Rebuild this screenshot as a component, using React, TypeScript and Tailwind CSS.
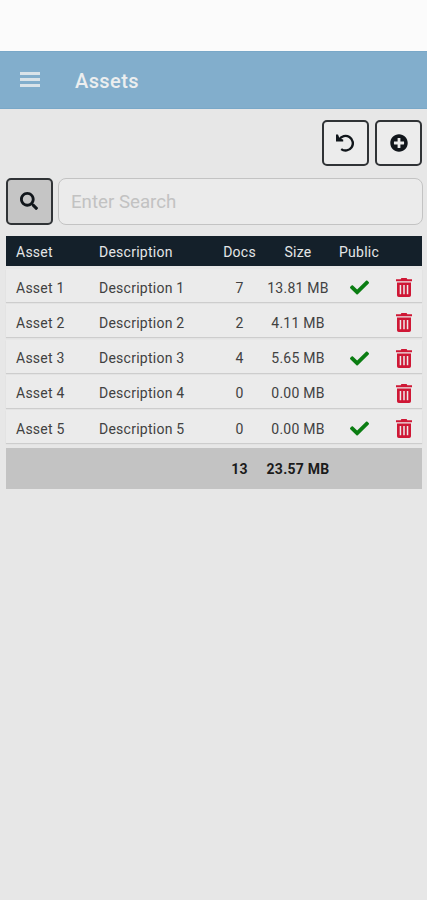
import { useState } from "react";
import { FaCheck, FaPlusCircle, FaSearch } from "react-icons/fa";

type Asset = {
  name: string;
  description: string;
  docs: number;
  size: number;
  isPublic: boolean;
};

const assets: Asset[] = [
  { name: "Asset 1", description: "Description 1", docs: 7, size: 13.81, isPublic: true },
  { name: "Asset 2", description: "Description 2", docs: 2, size: 4.11, isPublic: false },
  { name: "Asset 3", description: "Description 3", docs: 4, size: 5.65, isPublic: true },
  { name: "Asset 4", description: "Description 4", docs: 0, size: 0, isPublic: false },
  { name: "Asset 5", description: "Description 5", docs: 0, size: 0, isPublic: true },
];

const columns =
  "grid grid-cols-[83px_118px_45px_72px_50px_39px] items-center pl-2.5";

const Header = () => (
  <header className="flex h-[58px] items-center border-y border-[#79a8c8] bg-[#82aecc] pl-5 text-[#eceeef]">
    <button aria-label="Open menu" className="mb-px flex w-5 flex-col gap-[3px]">
      <span className="h-[3px] w-full bg-[#d9e3e9]" />
      <span className="h-[3px] w-full bg-[#d9e3e9]" />
      <span className="h-[3px] w-full bg-[#d9e3e9]" />
    </button>
    <h1 className="ml-[35px] pt-0.5 text-[20px] font-medium tracking-[0.4px]">
      Assets
    </h1>
  </header>
);

const UndoIcon = () => (
  <svg className="mr-0.5 h-[18px] w-[18px]" viewBox="0 0 18 18" fill="none">
    <path
      d="M3.2 5.6A7.3 7.3 0 1 1 5.2 15.1"
      stroke="currentColor"
      strokeWidth={2.4}
    />
    <path d="M0 .6h2L3.6 4.6l3.6.9v2H0z" fill="currentColor" />
  </svg>
);

const TrashIcon = () => (
  <svg className="h-[19px] w-4" viewBox="0 0 16 19" fill="currentColor">
    <path d="M5.4 0h5.2l.7 1.3H16v2H0v-2h4.7z" />
    <path
      fillRule="evenodd"
      d="M1 4.6h14v12.6a1.8 1.8 0 0 1-1.8 1.8H2.8A1.8 1.8 0 0 1 1 17.2zM3.7 7v9.2h1.5V7zM7.25 7v9.2h1.5V7zM10.8 7v9.2h1.5V7z"
    />
  </svg>
);

export default function App() {
  const [search, setSearch] = useState("");

  const visible = assets.filter((asset) =>
    asset.name.toLowerCase().includes(search.toLowerCase())
  );
  const totalDocs = visible.reduce((sum, asset) => sum + asset.docs, 0);
  const totalSize = visible.reduce((sum, asset) => sum + asset.size, 0);

  return (
    <div className="min-h-screen bg-[#e7e7e7] font-['Roboto',sans-serif]">
      <div className="h-[51px] bg-[#fbfbfb]" />
      <Header />

      <main className="pt-[11px] pr-1 pl-1.5">
        <div className="flex justify-end gap-1.5 pr-px">
          <button
            aria-label="Reset"
            onClick={() => setSearch("")}
            className="flex h-[46px] w-[47px] items-center justify-center rounded-[5px] border-2 border-[#303336] bg-[#ececec] text-[#11161b]"
          >
            <UndoIcon />
          </button>
          <button
            aria-label="Add asset"
            className="flex h-[46px] w-[47px] items-center justify-center rounded-[5px] border-2 border-[#303336] bg-[#ececec] text-[#11161b]"
          >
            <FaPlusCircle className="h-[18px] w-[18px]" />
          </button>
        </div>

        <div className="mt-3 flex gap-[5px]">
          <button
            aria-label="Search"
            className="flex h-[47px] w-[47px] shrink-0 items-center justify-center rounded-[5px] border-2 border-[#303336] bg-[#c5c5c5] pr-px pb-px text-[#11161b]"
          >
            <FaSearch className="h-[18px] w-[18px]" />
          </button>
          <input
            value={search}
            onChange={(e) => setSearch(e.target.value)}
            placeholder="Enter Search"
            className="h-[47px] min-w-0 flex-1 rounded-[8px] border border-[#c3c3c3] bg-[#ebebeb] px-3 text-[18.7px] text-[#333] outline-none placeholder:text-[#c2c2c2]"
          />
        </div>

        <div className="mt-[11px] mr-px text-[14px] tracking-[0.25px]">
          <div className={`${columns} h-[30px] bg-[#14202a] pt-0.5 text-[#e4e6e7]`}>
            <span>Asset</span>
            <span>Description</span>
            <span className="text-center">Docs</span>
            <span className="text-center">Size</span>
            <span className="text-center">Public</span>
          </div>

          <div className="flex flex-col pt-[3px]">
            {visible.map((asset) => (
              <div
                key={asset.name}
                className={`${columns} mb-[2.25px] h-[33px] bg-[#ebebeb] pt-[5px] text-[#414141] shadow-[0_1px_1px_#cdcdcd]`}
              >
                <span>{asset.name}</span>
                <span>{asset.description}</span>
                <span className="text-center">{asset.docs}</span>
                <span className="text-center">{asset.size.toFixed(2)} MB</span>
                <span className="flex justify-center">
                  {asset.isPublic && (
                    <FaCheck className="mb-px h-[19px] w-[19px] text-[#0b7d12]" />
                  )}
                </span>
                <button
                  aria-label={`Delete ${asset.name}`}
                  className="mb-px flex justify-center text-[#cf1735]"
                >
                  <TrashIcon />
                </button>
              </div>
            ))}
          </div>

          <div className={`${columns} mt-[3px] h-[41px] bg-[#c3c3c3] pt-px font-bold text-[#1b1b1b]`}>
            <span />
            <span />
            <span className="text-center">{totalDocs}</span>
            <span className="text-center">{totalSize.toFixed(2)} MB</span>
          </div>
        </div>
      </main>
    </div>
  );
}
